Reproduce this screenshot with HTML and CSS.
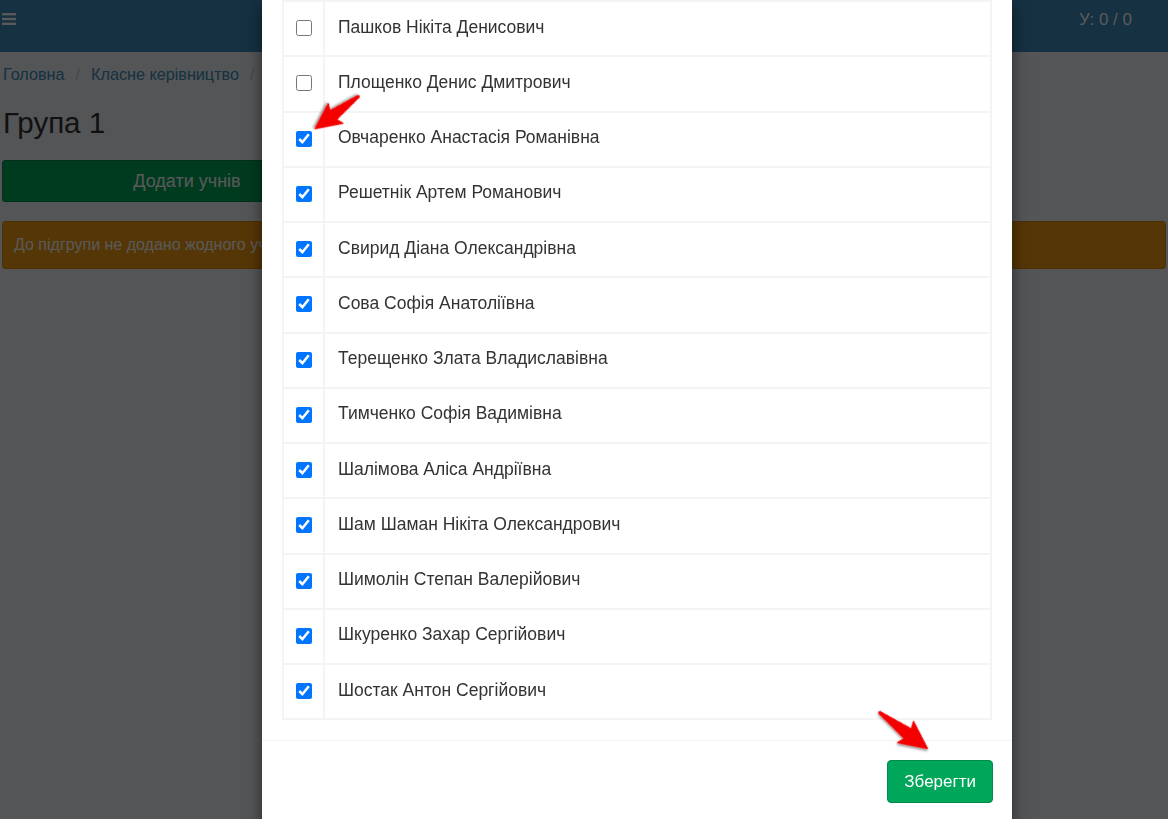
FILE: index.html
```
<!DOCTYPE html>
<html lang="uk">
<head>
<meta charset="utf-8">
<title>Група 1</title>
<link rel="stylesheet" href="styles.css">
</head>
<body>
<header class="topbar">
  <span class="burger"><svg width="14" height="12" viewBox="0 0 14 12"><rect x="0" y="0" width="14" height="2.4"/><rect x="0" y="4.8" width="14" height="2.4"/><rect x="0" y="9.6" width="14" height="2.4"/></svg></span>
  <span class="counter">У: 0 / 0</span>
</header>
<main class="content">
  <nav class="crumbs"><a>Головна</a><span class="sep">/</span><a>Класне керівництво</a><span class="sep">/</span><span class="cur">Група 1</span></nav>
  <h1 class="title">Група 1</h1>
  <div class="actions"><button class="btn-add">Додати учнів</button></div>
  <div class="alert">До підгрупи не додано жодного учня</div>
</main>
<div class="backdrop"></div>
<div class="modal">
  <div class="modal-body">
    <div class="table">
      <div class="row"><div class="cell-check"><input type="checkbox"></div><div class="cell-name">Пашков Нікіта Денисович</div></div>
      <div class="row"><div class="cell-check"><input type="checkbox"></div><div class="cell-name">Площенко Денис Дмитрович</div></div>
      <div class="row"><div class="cell-check"><input type="checkbox" checked></div><div class="cell-name">Овчаренко Анастасія Романівна</div></div>
      <div class="row"><div class="cell-check"><input type="checkbox" checked></div><div class="cell-name">Решетнік Артем Романович</div></div>
      <div class="row"><div class="cell-check"><input type="checkbox" checked></div><div class="cell-name">Свирид Діана Олександрівна</div></div>
      <div class="row"><div class="cell-check"><input type="checkbox" checked></div><div class="cell-name">Сова Софія Анатоліївна</div></div>
      <div class="row"><div class="cell-check"><input type="checkbox" checked></div><div class="cell-name">Терещенко Злата Владиславівна</div></div>
      <div class="row"><div class="cell-check"><input type="checkbox" checked></div><div class="cell-name">Тимченко Софія Вадимівна</div></div>
      <div class="row"><div class="cell-check"><input type="checkbox" checked></div><div class="cell-name">Шалімова Аліса Андріївна</div></div>
      <div class="row"><div class="cell-check"><input type="checkbox" checked></div><div class="cell-name">Шам Шаман Нікіта Олександрович</div></div>
      <div class="row"><div class="cell-check"><input type="checkbox" checked></div><div class="cell-name">Шимолін Степан Валерійович</div></div>
      <div class="row"><div class="cell-check"><input type="checkbox" checked></div><div class="cell-name">Шкуренко Захар Сергійович</div></div>
      <div class="row"><div class="cell-check"><input type="checkbox" checked></div><div class="cell-name">Шостак Антон Сергійович</div></div>
    </div>
  </div>
  <div class="modal-footer"><button class="btn-save">Зберегти</button></div>
</div>
<svg class="marks" width="1168" height="819" viewBox="0 0 1168 819">
  <defs>
    <filter id="sh" x="-20%" y="-40%" width="140%" height="180%">
      <feDropShadow dx="1" dy="1.5" stdDeviation="0.8" flood-color="#000" flood-opacity="0.45"/>
    </filter>
  </defs>
  <g transform="translate(359 96) rotate(143.3)" filter="url(#sh)">
    <polygon points="0,-1 32,-5.5 29,-12.5 55,0 29,12.5 32,5.5 0,1" fill="#f50000" stroke="#f50000" stroke-width="1" stroke-linejoin="round"/>
  </g>
  <g transform="translate(879 712) rotate(37)" filter="url(#sh)">
    <polygon points="0,-1 36,-6 33,-13.5 61,0 33,13.5 36,6 0,1" fill="#f50000" stroke="#f50000" stroke-width="1" stroke-linejoin="round"/>
  </g>
</svg>
</body>
</html>
```
FILE: styles.css
```
* { box-sizing: border-box; }
html, body { margin: 0; padding: 0; }
body {
  background: #f0f3f6;
  font-family: "Liberation Sans", Arial, sans-serif;
  color: #333;
  width: 1168px;
  height: 819px;
  overflow: hidden;
  position: relative;
}
.topbar {
  height: 52px;
  background: #3c8dbc;
  color: #fff;
  display: flex;
  align-items: center;
  justify-content: space-between;
  padding: 0 36px 0 2px;
}
.burger { display: flex; margin-top: -14px; }
.burger svg { fill: #fff; }
.counter { font-size: 17px; margin-top: -12px; }
.content { padding: 0 2px; }
.crumbs {
  font-size: 16.2px;
  padding: 13px 1px 0;
  height: 42px;
}
.crumbs a { color: #3c8dbc; }
.crumbs .sep { color: #ccc; padding: 0 11px; }
.crumbs .cur { color: #777; }
.title {
  font-size: 29.5px;
  font-weight: 400;
  margin: 11px 1px 0;
  line-height: 36px;
  height: 36px;
}
.actions { margin-top: 19px; display: flex; }
.btn-add {
  width: 370px;
  height: 42px;
  background: #00a65a;
  border: 1px solid #008d4c;
  border-radius: 3px;
  color: #fff;
  font: 18px "Liberation Sans", Arial, sans-serif;
}
.alert {
  margin-top: 19px;
  height: 48px;
  background: #f39c12;
  border: 1px solid #e08e0b;
  border-radius: 3px;
  color: #fff;
  font-size: 16px;
  padding: 14px 11px;
}
.backdrop {
  position: fixed;
  inset: 0;
  background: rgba(0, 0, 0, 0.65);
}
.modal {
  position: absolute;
  left: 262px;
  top: 0;
  width: 750px;
  height: 900px;
  background: #fff;
  box-shadow: 0 5px 15px rgba(0, 0, 0, 0.5);
}
.modal-body { padding: 0 20px 20px; }
.table { border: 2px solid #f4f4f4; border-bottom-width: 0; }
.row {
  display: flex;
  height: 55.25px;
  border-bottom: 2px solid #f4f4f4;
}
.cell-check {
  width: 41px;
  border-right: 2px solid #f4f4f4;
  display: flex;
  align-items: center;
  justify-content: center;
}
.cell-check input {
  width: 16px;
  height: 16px;
  margin: 0 0 1px 0;
}
.cell-name {
  display: flex;
  align-items: center;
  padding: 0 13px 3px;
  font-size: 17.5px;
  color: #333;
}
.modal-footer {
  border-top: 1px solid #f4f4f4;
  padding: 19px 19px 20px;
  display: flex;
  justify-content: flex-end;
}
.btn-save {
  background: #00a65a;
  border: 1px solid #008d4c;
  border-radius: 4px;
  color: #fff;
  font: 17px "Liberation Sans", Arial, sans-serif;
  height: 43px;
  padding: 0 16px;
}
.marks { position: absolute; left: 0; top: 0; pointer-events: none; }
```
